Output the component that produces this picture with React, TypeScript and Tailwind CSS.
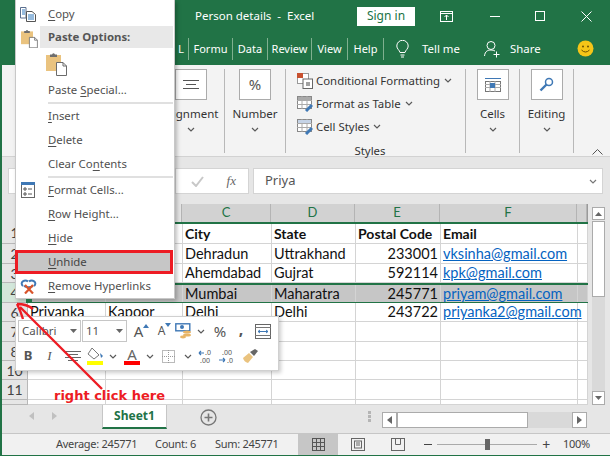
import React from "react";

const Chev = ({ c = "#5a5a5a" }: { c?: string }) => (
  <svg width="8" height="5" viewBox="0 0 8 5"><path d="M1 1L4 4L7 1" fill="none" stroke={c} strokeWidth="1.2" /></svg>
);

const Clip = ({ s = 1 }: { s?: number }) => (
  <svg width={21 * s} height={24 * s} viewBox="0 0 21 24">
    <path d="M0 3H15V19H0Z" fill="#eac37f" />
    <path d="M4 2.5H6Q7.5 0 9 2.5H11V5H4Z" fill="#6e6e6e" />
    <path d="M10.5 10.5H17L20.5 14V23.5H10.5Z" fill="#fff" stroke="#6b6b6b" />
    <path d="M17 10.5V14H20.5" fill="none" stroke="#6b6b6b" />
  </svg>
);

const Item = ({ children }: { children: React.ReactNode }) => (
  <div className="h-6 flex items-center pl-[32px] text-[11.4px] text-[#505050]"><span>{children}</span></div>
);

const U = ({ children }: { children: React.ReactNode }) => <span className="underline underline-offset-2">{children}</span>;

const Sep = () => <div className="ml-[32px] mr-[1px] h-[2px] bg-[#e0e0e0]" />;

const ContextMenu = () => (
  <div className="absolute left-[13px] top-0 w-[160px] h-[299px] bg-white border-x border-b border-[#c8c8c8] shadow-[2px_2px_4px_rgba(0,0,0,0.25)] pt-[2px]">
    <div className="relative">
      <Item><U>C</U>opy</Item>
      <div className="absolute left-[4px] top-[5px]">
        <svg width="16" height="15" viewBox="0 0 16 15">
          <path d="M.5.5H6V11H.5Z" fill="#fff" stroke="#5a6f8f" />
          <path d="M2 3H5M2 5H5M2 7H5" stroke="#2f78bd" />
          <path d="M6.5 4.5H12L15.5 7.5V14.5H6.5Z" fill="#fff" stroke="#555" />
          <path d="M8 8H14M8 10H14M8 12H14" stroke="#2f78bd" />
        </svg>
      </div>
    </div>
    <div className="relative">
      <div className="ml-[24px] mr-[1px] h-[22px] bg-[#e8e8e8] flex items-center pl-[8px] text-[11.4px] font-bold text-[#555]">Paste Options:</div>
      <div className="absolute left-[5px] top-[3px]"><Clip s={0.8} /></div>
    </div>
    <div className="h-[30px] pl-[30px] pt-[4px]"><Clip /></div>
    <Item>Paste <U>S</U>pecial...</Item>
    <Sep />
    <Item><U>I</U>nsert</Item>
    <Item><U>D</U>elete</Item>
    <Item>Clear Co<U>n</U>tents</Item>
    <Sep />
    <div className="relative">
      <Item><U>F</U>ormat Cells...</Item>
      <div className="absolute left-[5px] top-[4px]">
        <svg width="14" height="16" viewBox="0 0 14 16">
          <rect x=".5" y=".5" width="13" height="15" fill="#fff" stroke="#666" />
          <rect x="0" y="0" width="14" height="3" fill="#3f78b5" />
          <path d="M3 6H5V8H3ZM3 11H5V13H3Z" fill="none" stroke="#555" />
          <path d="M7 7H11M7 12H11" stroke="#555" />
        </svg>
      </div>
    </div>
    <Item><U>R</U>ow Height...</Item>
    <Item><U>H</U>ide</Item>
    <div className="-ml-px w-[158px] h-6 bg-[#c6c6c6] border-[3px] border-[#ed1c24] flex items-center pl-[30px] text-[11.4px] text-[#444]"><span><U>U</U>nhide</span></div>
    <div className="relative">
      <Item><U>R</U>emove Hyperlinks</Item>
      <div className="absolute left-[4px] top-[5px]">
        <svg width="17" height="15" viewBox="0 0 17 15">
          <path d="M3 7C-1 3 5 0 8 2.5M14 7C18 3 12 0 9 2.5M4 7C6 8.5 11 8.5 13 7" fill="none" stroke="#3f78b5" strokeWidth="2" />
          <path d="M5 6L13 14.5M13 6L5 14.5" stroke="#d9542b" strokeWidth="2.2" />
        </svg>
      </div>
    </div>
  </div>
);

const MiniCombo = ({ w, t }: { w: string; t: string }) => (
  <div className={`${w} h-[22px] border border-[#c6c6c6] flex items-center justify-between px-[3px] text-[11.5px] text-[#555]`}>
    <span>{t}</span>
    <svg width="7" height="4" viewBox="0 0 7 4"><path d="M0 0H7L3.5 4Z" fill="#666" /></svg>
  </div>
);

const Slot = ({ w, children }: { w: string; children: React.ReactNode }) => (
  <div className={`${w} flex justify-center items-center`}>{children}</div>
);

const MiniToolbar = () => (
  <div className="absolute left-[13px] top-[316px] w-[264px] h-[55px] bg-white border border-[#d0d0d0] shadow-[2px_2px_4px_rgba(0,0,0,0.2)] pl-[2px] pt-[3px] flex flex-col gap-[2px]">
    <div className="flex h-[22px] items-center">
      <MiniCombo w="w-[63px] mr-px" t="Calibri" />
      <MiniCombo w="w-[45px]" t="11" />
      <Slot w="w-[23px]">
        <span className="relative text-[15px] text-[#555] leading-none">A<svg className="absolute -right-[6px] top-0" width="6" height="4" viewBox="0 0 6 4"><path d="M0 4L3 0L6 4Z" fill="#3f78b5" /></svg></span>
      </Slot>
      <Slot w="w-[23px]">
        <span className="relative text-[12px] text-[#555] leading-none">A<svg className="absolute -right-[6px] -top-[2px]" width="6" height="4" viewBox="0 0 6 4"><path d="M0 0H6L3 4Z" fill="#3f78b5" /></svg></span>
      </Slot>
      <Slot w="w-[20px]">
        <svg width="17" height="16" viewBox="0 0 17 16">
          <rect x=".8" y=".8" width="14" height="7" fill="#fff" stroke="#3f78b5" strokeWidth="1.4" />
          <circle cx="7" cy="4" r="2" fill="#3f78b5" />
          <ellipse cx="12" cy="9" rx="4" ry="1.6" fill="#e8b567" />
          <ellipse cx="12" cy="12" rx="4" ry="1.6" fill="#e8b567" />
          <ellipse cx="8" cy="14" rx="3" ry="1.4" fill="#e8b567" />
        </svg>
      </Slot>
      <Slot w="w-[16px]"><Chev /></Slot>
      <Slot w="w-[22px]"><span className="text-[15px] text-[#555] leading-none">%</span></Slot>
      <Slot w="w-[20px]"><span className="text-[16px] font-bold text-[#555] leading-none -mt-1">,</span></Slot>
      <Slot w="w-[24px]">
        <svg width="16" height="15" viewBox="0 0 16 15">
          <rect x=".5" y=".5" width="15" height="14" fill="#fff" stroke="#666" />
          <path d="M0 3.5H16M0 11.5H16" stroke="#777" />
          <path d="M3 7.5H13M3 7.5L5 6M3 7.5L5 9M13 7.5L11 6M13 7.5L11 9" fill="none" stroke="#3f78b5" />
        </svg>
      </Slot>
    </div>
    <div className="flex h-[24px] items-center">
      <Slot w="w-[20px]"><span className="text-[13px] font-bold text-[#555]">B</span></Slot>
      <Slot w="w-[23px]"><span className="text-[13px] italic text-[#555] font-['Liberation_Serif',serif]">I</span></Slot>
      <Slot w="w-[24px]">
        <svg width="16" height="11" viewBox="0 0 16 11"><path d="M0 .5H16M3 3.5H13M0 6.5H16M3 9.5H13" stroke="#666" /></svg>
      </Slot>
      <Slot w="w-[20px]">
        <svg width="17" height="18" viewBox="0 0 17 18">
          <path d="M5 1L12 8L7 12L1 7Z" fill="#fff" stroke="#777" />
          <path d="M13 6L16 9L14 11Z" fill="#3f78b5" />
          <rect x="0" y="14" width="16" height="4" fill="#ffff00" />
        </svg>
      </Slot>
      <Slot w="w-[16px]"><Chev /></Slot>
      <Slot w="w-[22px]">
        <div className="flex flex-col items-center leading-none">
          <span className="text-[15px] text-[#666] leading-[13px]">A</span>
          <div className="w-4 h-1 bg-[#ff0000]" />
        </div>
      </Slot>
      <Slot w="w-[14px]"><Chev /></Slot>
      <Slot w="w-[23px]">
        <svg width="13" height="13" viewBox="0 0 13 13"><rect x=".5" y=".5" width="12" height="12" fill="none" stroke="#777" strokeDasharray="1 1" /><path d="M6.5 0V13M0 6.5H13" stroke="#999" strokeDasharray="1 1" /></svg>
      </Slot>
      <Slot w="w-[15px]"><Chev /></Slot>
      <Slot w="w-[21px]">
        <svg width="16" height="15" viewBox="0 0 16 15">
          <path d="M1 4H6M1 4L3 2M1 4L3 6" fill="none" stroke="#3f78b5" strokeWidth="1.2" />
          <text x="7" y="6" fontSize="7" fill="#555" fontFamily="Noto Sans">.0</text>
          <text x="2" y="14" fontSize="7" fill="#555" fontFamily="Noto Sans">.00</text>
        </svg>
      </Slot>
      <Slot w="w-[22px]">
        <svg width="16" height="15" viewBox="0 0 16 15">
          <text x="3" y="6" fontSize="7" fill="#555" fontFamily="Noto Sans">.00</text>
          <path d="M0 11H6M6 11L4 9M6 11L4 13" fill="none" stroke="#3f78b5" strokeWidth="1.2" />
          <text x="8" y="14" fontSize="7" fill="#555" fontFamily="Noto Sans">.0</text>
        </svg>
      </Slot>
      <Slot w="w-[24px]">
        <svg width="17" height="16" viewBox="0 0 17 16">
          <path d="M1 10L7 5L11 9L6 15Q2 14 1 10Z" fill="#eac37f" />
          <path d="M8 4L13 1L16 3L12 8Z" fill="#666" />
        </svg>
      </Slot>
    </div>
  </div>
);

const TabItem = ({ w, children }: { w: string; children: React.ReactNode }) => (
  <div className={`${w} h-[22px] border-r border-[#7fb08f] flex items-center justify-center text-[11px] text-white`}>{children}</div>
);

const RibbonBtn = ({ w, label, children }: { w: string; label: string; children: React.ReactNode }) => (
  <div className={`${w} border-r border-[#b8b8b8] h-[84px] flex flex-col items-center`}>
    <div className="w-[32px] h-[31px] bg-white border border-[#ababab] flex items-center justify-center">{children}</div>
    <div className="mt-[5px] text-[11.5px] leading-[17px] text-[#333] whitespace-nowrap">{label}</div>
    <div className="mt-[5px]"><Chev /></div>
  </div>
);

const StyleRow = ({ label, chev, children }: { label: string; chev?: boolean; children: React.ReactNode }) => (
  <div className="h-[23px] flex items-center gap-[3px] text-[11.4px] text-[#333]">
    {children}
    <span>{label}</span>
    {chev && <span className="ml-[1px]"><Chev /></span>}
  </div>
);

const CF = ({ fill }: { fill: string }) => (
  <svg width="16" height="16" viewBox="0 0 16 16">
    <rect x=".5" y=".5" width="14" height="12" fill="#fff" stroke="#888" />
    <path d="M0 4.5H15M0 8.5H15M5 0V13M10 0V13" stroke="#aaa" />
    <rect x="1" y="1" width="13" height="3" fill={fill} />
    <path d="M9 15L15 9" stroke="#3f78b5" strokeWidth="3" />
  </svg>
);

const Ribbon = () => (
  <div className="h-[92px] bg-[#f3f3f3] border-b border-[#d2d2d2] flex pt-[4px]">
    <div className="w-[155px]" />
    <RibbonBtn w="w-[68px]" label="Alignment">
      <svg width="16" height="12" viewBox="0 0 16 12"><path d="M0 1.5H16M3 5.5H13M0 9.5H16" stroke="#555" /></svg>
    </RibbonBtn>
    <RibbonBtn w="w-[61px]" label="Number"><span className="text-[15px] text-[#555]">%</span></RibbonBtn>
    <div className="w-[180px] h-[84px] border-r border-[#b8b8b8] pl-[11px] flex flex-col relative">
      <div>
        <StyleRow label="Conditional Formatting" chev>
          <svg width="16" height="16" viewBox="0 0 16 16">
            <rect x=".5" y=".5" width="11" height="10" fill="#fff" stroke="#999" />
            <rect x="0" y="0" width="6" height="5" fill="#c8502f" />
            <rect x="6" y="6" width="9.5" height="9.5" fill="#fff" stroke="#666" />
            <path d="M9 10H13M9 12H13" stroke="#444" />
          </svg>
        </StyleRow>
        <StyleRow label="Format as Table" chev><CF fill="#aaa" /></StyleRow>
        <StyleRow label="Cell Styles" chev><CF fill="#c5d3e6" /></StyleRow>
      </div>
      <div className="text-[11.4px] text-[#333] text-center mt-[4px] pr-[22px]">Styles</div>
    </div>
    <RibbonBtn w="w-[54px]" label="Cells">
      <svg width="16" height="16" viewBox="0 0 16 16">
        <path d="M0 1.5H16" stroke="#3f78b5" />
        <rect x=".5" y="4.5" width="15" height="10" fill="#fff" stroke="#777" />
        <path d="M0 7.5H16M0 10.5H16M5 4V15M10 4V15" stroke="#aaa" />
        <rect x="5" y="6" width="5" height="5" fill="#3f78b5" />
      </svg>
    </RibbonBtn>
    <RibbonBtn w="w-[54px]" label="Editing">
      <svg width="15" height="15" viewBox="0 0 15 15"><circle cx="10" cy="5" r="3.5" fill="none" stroke="#3f78b5" strokeWidth="1.5" /><path d="M7.5 7.5L1.5 13.5" stroke="#3f78b5" strokeWidth="2.4" /></svg>
    </RibbonBtn>
    <div className="flex-1 flex justify-end items-end pr-[7px] pb-[1px]">
      <svg width="11" height="6" viewBox="0 0 11 6"><path d="M.5 5.5L5.5 .5L10.5 5.5" fill="none" stroke="#555" /></svg>
    </div>
  </div>
);

const COLS = ["w-[78px]", "w-[77px]", "w-[89px]", "w-[84px]", "w-[85px]", "w-[137px]", "w-[10px]"];

const Cell = ({ i, right, link, bold, children }: { i: number; right?: boolean; link?: boolean; bold?: boolean; children?: React.ReactNode }) => (
  <div className={`${COLS[i]} shrink-0 border-r border-[#d4d4d4] h-full flex items-center px-[2px] whitespace-nowrap ${right ? "justify-end" : ""} ${link ? "text-[#0563c1] underline" : ""} ${bold ? "font-bold text-[14px]" : ""}`}>{children}</div>
);

const Row = ({ n, h, cls = "bg-white", head = "bg-[#e6e6e6]", vals = [] }: { n: string; h: string; cls?: string; head?: string; vals?: (string | undefined)[] }) => (
  <div className={`flex ${h}`}>
    <div className={`w-[26px] shrink-0 ${head} border-r border-b border-[#b8b8b8] flex items-center justify-center text-[14px] text-[#444]`}>{n}</div>
    <div className={`flex border-b border-[#d4d4d4] ${cls}`}>
      <Cell i={0}>{vals[0]}</Cell>
      <Cell i={1}>{vals[1]}</Cell>
      <Cell i={2}>{vals[2]}</Cell>
      <Cell i={3}>{vals[3]}</Cell>
      <Cell i={4} right>{vals[4]}</Cell>
      <Cell i={5} link={!!vals[5]}>{vals[5]}</Cell>
      <Cell i={6} />
    </div>
  </div>
);

const ColHead = ({ i, t, sel }: { i: number; t: string; sel?: boolean }) => (
  <div className={`${COLS[i]} shrink-0 border-r border-[#b4b4b4] flex items-center justify-center text-[13px] ${sel ? "bg-[#d2d2d2] text-[#217346]" : "bg-[#e6e6e6] text-[#444]"}`}>{t}</div>
);

const Sheet = () => (
  <div className="h-[201px] flex font-['Lato','Carlito',sans-serif] text-[14.5px] text-[#111]">
    <div className="w-[586px] flex flex-col border-r border-[#9a9a9a]">
      <div className="flex h-[18px]">
        <div className="w-[26px] bg-[#e6e6e6] border-r border-[#b4b4b4]" />
        <ColHead i={0} t="A" />
        <ColHead i={1} t="B" />
        <ColHead i={2} t="C" sel />
        <ColHead i={3} t="D" sel />
        <ColHead i={4} t="E" sel />
        <ColHead i={5} t="F" sel />
        <ColHead i={6} t="" sel />
      </div>
      <div className="flex h-[22px]">
        <div className="w-[26px] shrink-0 bg-[#e6e6e6] border-r border-b border-[#b8b8b8] flex items-center justify-center text-[14px] text-[#444]">1</div>
        <div className="flex bg-white border-t-2 border-b border-t-[#217346] border-b-[#d4d4d4]">
          <Cell i={0} /><Cell i={1} /><Cell i={2} bold>City</Cell><Cell i={3} bold>State</Cell><Cell i={4} bold>Postal Code</Cell><Cell i={5} bold>Email</Cell><Cell i={6} />
        </div>
      </div>
      <Row n="2" h="h-[20px]" vals={[undefined, undefined, "Dehradun", "Uttrakhand", "233001", "vksinha@gmail.com"]} />
      <Row n="3" h="h-[19px]" vals={[undefined, undefined, "Ahemdabad", "Gujrat", "592114", "kpk@gmail.com"]} />
      <Row n="4" h="h-[20px]" head="bg-[#d3e7da]" cls="border-y-2 border-y-[#217346] bg-[#c6c6c6]" vals={[undefined, undefined, "Mumbai", "Maharatra", "245771", "priyam@gmail.com"]} />
      <Row n="6" h="h-[19px]" vals={["Priyanka", "Kapoor", "Delhi", "Delhi", "243722", "priyanka2@gmail.com"]} />
      <Row n="7" h="h-[20px]" />
      <Row n="8" h="h-[19px]" />
      <Row n="10" h="h-[19px]" />
      <Row n="11" h="h-[20px]" />
      <Row n="" h="h-[5px]" />
    </div>
    <div className="w-[22px] pl-[4px] pr-[5px] pt-[3px] flex flex-col items-stretch">
      <div className="h-[13px] bg-white border border-[#ababab] flex items-center justify-center"><svg width="7" height="4" viewBox="0 0 7 4"><path d="M0 4H7L3.5 0Z" fill="#666" /></svg></div>
      <div className="h-[76px] mt-px bg-white border border-[#ababab]" />
      <div className="flex-1 bg-[#d9d9d9]" />
      <div className="h-[14px] bg-white border border-[#ababab] flex items-center justify-center"><svg width="7" height="4" viewBox="0 0 7 4"><path d="M0 0H7L3.5 4Z" fill="#666" /></svg></div>
    </div>
  </div>
);

const TabsBar = () => (
  <div className="h-[28px] bg-[#e6e6e6] flex">
    <div className="w-[100px] flex items-center gap-[18px] pl-[27px] pb-[6px]">
      <svg width="5" height="8" viewBox="0 0 5 8"><path d="M5 0V8L0 4Z" fill="#c0c0c0" /></svg>
      <svg width="5" height="8" viewBox="0 0 5 8"><path d="M0 0V8L5 4Z" fill="#c0c0c0" /></svg>
    </div>
    <div className="w-[65px] h-[24px] bg-white border-x border-b-2 border-x-[#c6c6c6] border-b-[#217346] flex items-center justify-center text-[12px] font-bold text-[#217346]">Sheet1</div>
    <div className="w-[83px] flex items-center justify-center pb-[4px]">
      <svg width="17" height="17" viewBox="0 0 17 17"><circle cx="8.5" cy="8.5" r="7.5" fill="none" stroke="#777" strokeWidth="1.3" /><path d="M4.5 8.5H12.5M8.5 4.5V12.5" stroke="#777" strokeWidth="1.6" /></svg>
    </div>
    <div className="w-[125px] flex items-center justify-end pr-[4px] pb-[5px]">
      <svg width="3" height="11" viewBox="0 0 3 11"><path d="M0 0H3V3H0ZM0 4H3V7H0ZM0 8H3V11H0Z" fill="#b5b5b5" /></svg>
    </div>
    <div className="w-[205px] h-[16px] mt-[7px] ml-[7px] flex">
      <div className="w-[15px] bg-white border border-[#ababab] flex items-center justify-center"><svg width="5" height="8" viewBox="0 0 5 8"><path d="M5 0V8L0 4Z" fill="#666" /></svg></div>
      <div className="w-[131px] bg-white border border-[#ababab]" />
      <div className="flex-1 bg-[#d9d9d9]" />
      <div className="w-[15px] bg-white border border-[#ababab] flex items-center justify-center"><svg width="5" height="8" viewBox="0 0 5 8"><path d="M0 0V8L5 4Z" fill="#666" /></svg></div>
    </div>
  </div>
);

const StatusBar = () => (
  <div className="h-[23px] bg-[#f1f1f1] border-t border-[#c6c6c6] border-b border-b-[#217346] flex items-center text-[11px] tracking-[-0.3px] text-[#444]">
    <div className="w-[54px]" />
    <span className="w-[99px]">Average: 245771</span>
    <span className="w-[60px]">Count: 6</span>
    <span className="w-[83px]">Sum: 245771</span>
    <div className="w-[40px] h-full bg-[#c6c6c6] flex items-center justify-center">
      <svg width="13" height="13" viewBox="0 0 13 13"><rect x=".5" y=".5" width="12" height="12" fill="none" stroke="#555" /><path d="M4.5 0V13M8.5 0V13M0 4.5H13M0 8.5H13" stroke="#555" /></svg>
    </div>
    <div className="w-[40px] flex justify-center">
      <svg width="14" height="13" viewBox="0 0 14 13"><rect x=".5" y=".5" width="13" height="12" fill="none" stroke="#666" /><rect x="3.5" y="3" width="7" height="7" fill="none" stroke="#666" /><path d="M5 5H9M5 7H9" stroke="#666" /></svg>
    </div>
    <div className="w-[40px] flex justify-center">
      <svg width="14" height="13" viewBox="0 0 14 13"><rect x=".5" y=".5" width="13" height="12" fill="none" stroke="#666" /><path d="M4.5 0V6.5H9.5V0" fill="none" stroke="#666" /></svg>
    </div>
    <div className="w-[8px] ml-[6px] h-[1px] bg-[#444]" />
    <div className="relative w-[100px] h-[1px] bg-[#aaa] ml-[5px]">
      <div className="absolute left-[48px] -top-[5px] w-[5px] h-[11px] bg-[#666]" />
    </div>
    <div className="w-[18px] flex justify-center text-[14px] leading-none text-[#444]">+</div>
    <span className="ml-[8px]">100%</span>
  </div>
);

export default function App() {
  return (
    <div className="relative w-[610px] h-[456px] overflow-hidden bg-[#e6e6e6] border-l-2 border-[#217346] font-['Noto_Sans',sans-serif] text-[12px]">
      <div className="h-[32px] bg-[#217346] flex items-center">
        <div className="w-[193px]" />
        <div className="w-[162px] text-[11.5px] text-white whitespace-pre">Person details  -  Excel</div>
        <div className="w-[58px] h-[19px] bg-white text-[#217346] flex items-center justify-center text-[12px]">Sign in</div>
        <div className="w-[19px]" />
        <Slot w="w-[24px]">
          <svg width="13" height="11" viewBox="0 0 13 11"><rect x=".5" y=".5" width="12" height="10" fill="none" stroke="#fff" /><path d="M0 2.5H13M6.5 9V4M4.5 6L6.5 4L8.5 6" fill="none" stroke="#fff" /></svg>
        </Slot>
        <div className="w-[25px]" />
        <Slot w="w-[24px]"><div className="w-[10px] h-px bg-white" /></Slot>
        <div className="w-[21px]" />
        <Slot w="w-[24px]"><div className="w-[10px] h-[10px] border border-white" /></Slot>
        <div className="w-[22px]" />
        <Slot w="w-[24px]">
          <svg width="11" height="11" viewBox="0 0 11 11"><path d="M.5.5L10.5 10.5M10.5.5L.5 10.5" stroke="#fff" /></svg>
        </Slot>
      </div>
      <div className="h-[33px] bg-[#217346] flex items-start pt-[6px] text-[11.4px]">
        <div className="w-[187px] h-[22px] border-r border-[#7fb08f] flex items-center justify-end pr-[4px] text-white">L</div>
        <TabItem w="w-[44px]">Formu</TabItem>
        <TabItem w="w-[35px]">Data</TabItem>
        <TabItem w="w-[44px]">Review</TabItem>
        <TabItem w="w-[36px]">View</TabItem>
        <TabItem w="w-[36px]">Help</TabItem>
        <div className="w-[36px] h-[22px] flex items-center justify-center">
          <svg width="13" height="18" viewBox="0 0 13 18"><path d="M4 12.5C3.5 10 .8 9 .8 6A5.7 5.7 0 0 1 12.2 6C12.2 9 9.5 10 9 12.5ZM4.5 15H8.5M5 17H8" fill="none" stroke="#fff" /></svg>
        </div>
        <div className="w-[48px] h-[22px] flex items-center text-white ml-[2px]">Tell me</div>
        <div className="w-[26px] h-[22px] flex items-center justify-center ml-[9px]">
          <svg width="17" height="18" viewBox="0 0 17 18"><circle cx="7" cy="5.5" r="4" fill="none" stroke="#fff" /><path d="M.5 16C1 11 4 10 7 10C8.5 10 10 10.3 11 11" fill="none" stroke="#fff" /><path d="M12.5 11.5V17.5M9.5 14.5H15.5" stroke="#fff" /></svg>
        </div>
        <div className="w-[72px] h-[22px] flex items-center text-white pl-[5px]">Share</div>
        <svg width="17" height="17" viewBox="0 0 17 17" className="mt-[2px]"><circle cx="8.5" cy="8.5" r="8" fill="#f5c518" /><circle cx="6" cy="6.5" r="1" fill="#6b5200" /><circle cx="11" cy="6.5" r="1" fill="#6b5200" /><path d="M4.5 10Q8.5 14 12.5 10" fill="none" stroke="#6b5200" /></svg>
      </div>
      <Ribbon />
      <div className="h-[47px] pt-[11px] flex bg-[#e6e6e6]">
        <div className="ml-[6px] w-[167px] h-[26px] bg-white border border-[#d4d4d4]" />
        <div className="w-[74px] h-[26px] bg-white border border-[#d4d4d4] flex items-center justify-end gap-[23px] pr-[12px]">
          <svg width="13" height="11" viewBox="0 0 13 11"><path d="M1 6L5 10L12 1" fill="none" stroke="#c8c8c8" strokeWidth="2" /></svg>
          <span className="text-[13px] italic text-[#666] font-['Liberation_Serif',serif]">fx</span>
        </div>
        <div className="ml-[4px] w-[350px] h-[26px] bg-white border border-[#d4d4d4] flex items-center justify-between pl-[11px] pr-[5px] text-[13px] text-[#555]">
          <span>Priya</span>
          <Chev c="#777" />
        </div>
      </div>
      <Sheet />
      <TabsBar />
      <StatusBar />
      <ContextMenu />
      <div className="absolute left-[24px] top-[299px] w-[6px] h-[4px] bg-[#217346]" />
      <MiniToolbar />
      <svg className="absolute -left-[2px] top-0 pointer-events-none" width="610" height="456" viewBox="0 0 610 456">
        <path d="M102 389L20 307M17 304Q27 304 33 309M17 304Q21 312 23 319" fill="none" stroke="#ed1c24" strokeWidth="2.4" />
      </svg>
      <div className="absolute left-[52px] top-[387px] font-['DejaVu_Sans',sans-serif] text-[13px] leading-[18px] font-bold text-[#ed1c24] whitespace-nowrap">right click here</div>
    </div>
  );
}
